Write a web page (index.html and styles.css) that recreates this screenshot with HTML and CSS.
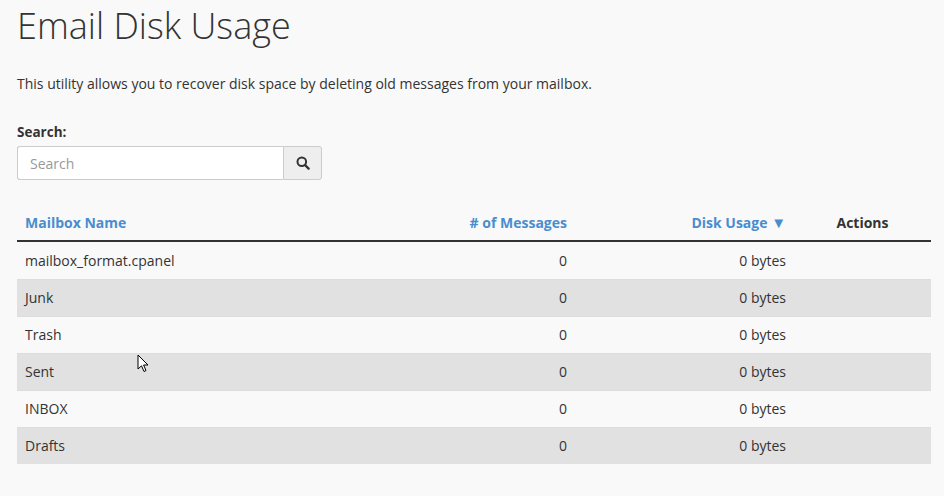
FILE: index.html
```html
<!DOCTYPE html>
<html>
<head>
<meta charset="utf-8">
<link rel="stylesheet" href="styles.css">
</head>
<body>
<div class="page">
  <h1 class="title">Email Disk Usage</h1>
  <p class="intro">This utility allows you to recover disk space by deleting old messages from your mailbox.</p>
  <label class="search-label">Search:</label>
  <div class="search-group">
    <input class="search-input" type="text" placeholder="Search">
    <button class="search-btn" type="button">
      <svg width="14" height="14" viewBox="0 0 14 14"><circle cx="5.8" cy="5.8" r="4.3" fill="none" stroke="#333" stroke-width="2"/><line x1="9" y1="9" x2="12.6" y2="12.6" stroke="#333" stroke-width="2.4" stroke-linecap="round"/></svg>
    </button>
  </div>
  <table class="usage">
    <colgroup><col class="c1"><col class="c2"><col class="c3"><col class="c4"></colgroup>
    <thead>
      <tr>
        <th class="left link">Mailbox Name</th>
        <th class="right link">#&nbsp;of Messages</th>
        <th class="right link">Disk Usage <span class="arrow">▼</span></th>
        <th class="center">Actions</th>
      </tr>
    </thead>
    <tbody>
      <tr><td>mailbox_format.cpanel</td><td class="right">0</td><td class="right">0 bytes</td><td></td></tr>
      <tr><td>Junk</td><td class="right">0</td><td class="right">0 bytes</td><td></td></tr>
      <tr><td>Trash</td><td class="right">0</td><td class="right">0 bytes</td><td></td></tr>
      <tr><td>Sent</td><td class="right">0</td><td class="right">0 bytes</td><td></td></tr>
      <tr><td>INBOX</td><td class="right">0</td><td class="right">0 bytes</td><td></td></tr>
      <tr><td>Drafts</td><td class="right">0</td><td class="right">0 bytes</td><td></td></tr>
    </tbody>
  </table>
</div>
<svg class="cursor" width="14" height="20" viewBox="0 0 14 20"><path d="M1 1 L1 15 L4.5 11.8 L7 17.5 L9 16.6 L6.6 11 L11 11 Z" fill="#fff" stroke="#000" stroke-width="1" stroke-linejoin="round"/></svg>
</body>
</html>
```
FILE: styles.css
```css
html, body {
  margin: 0;
  padding: 0;
  background: #f9f9f9;
}
body {
  font-family: "Open Sans", "Liberation Sans", sans-serif;
  color: #333;
  font-size: 14px;
  width: 944px;
  height: 496px;
  overflow: hidden;
}
.page {
  padding: 0 13px 0 17px;
}
.title {
  margin: 0;
  padding-top: 2px;
  font-size: 36px;
  font-weight: 300;
  line-height: 48px;
  color: #333;
}
.intro {
  margin: 24px 0 0 0;
  line-height: 20px;
  font-size: 14px;
}
.search-label {
  display: block;
  margin-top: 28px;
  font-weight: 700;
  font-size: 13.5px;
  line-height: 20px;
  color: #333;
}
.search-group {
  display: flex;
  margin-top: 4px;
  width: 305px;
  height: 34px;
}
.search-input {
  box-sizing: border-box;
  width: 266px;
  height: 34px;
  border: 1px solid #ccc;
  border-right: none;
  border-radius: 3px 0 0 3px;
  background: #fff;
  padding: 0 12px;
  font-family: "Open Sans", "Liberation Sans", sans-serif;
  font-size: 14px;
  color: #333;
  outline: none;
}
.search-input::placeholder {
  color: #999;
}
.search-btn {
  box-sizing: border-box;
  width: 39px;
  height: 34px;
  border: 1px solid #ccc;
  border-radius: 0 3px 3px 0;
  background: #eee;
  display: flex;
  align-items: center;
  justify-content: center;
  padding: 0;
}
.usage {
  margin-top: 24px;
  width: 914px;
  border-collapse: collapse;
  table-layout: fixed;
}
.c1 { width: 383px; }
.c2 { width: 175px; }
.c3 { width: 219px; }
.c4 { width: 137px; }
.usage th {
  font-weight: 700;
  font-size: 14px;
  height: 36px;
  padding: 0 8px;
  border-bottom: 2px solid #333;
  vertical-align: middle;
}
.usage th.link { color: #4a8dcf; }
.usage th.left { text-align: left; }
.usage th.right { text-align: right; }
.usage th.center { text-align: center; color: #333; }
.arrow { font-size: 15px; }
.usage td {
  height: 36px;
  padding: 0 8px;
  border-top: 1px solid #ddd;
  font-size: 14px;
  line-height: 20px;
  color: #333;
  vertical-align: middle;
}
.usage tbody tr:first-child td { border-top: none; height: 37px; }
.usage tbody tr:nth-child(even) td { background: #e1e1e1; }
.usage td.right { text-align: right; }
.cursor {
  position: absolute;
  left: 137px;
  top: 354px;
}
```
